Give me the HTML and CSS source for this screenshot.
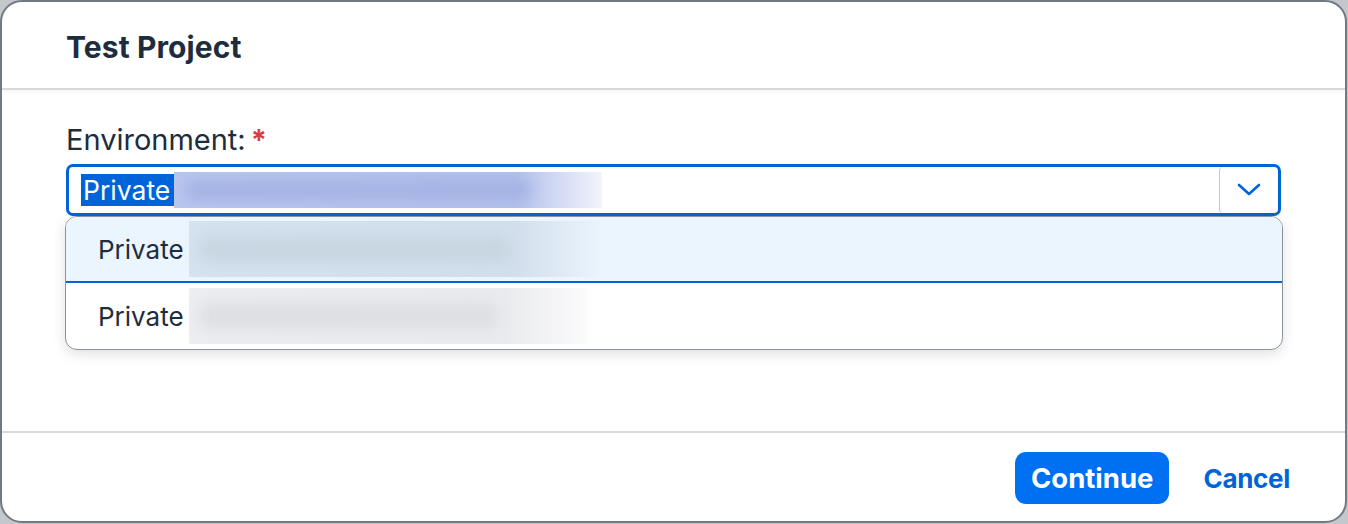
FILE: index.html
```html
<!DOCTYPE html>
<html>
<head>
<meta charset="utf-8">
<link rel="stylesheet" href="styles.css">
</head>
<body>
<div class="dialog">
  <header class="dlg-header">
    <h1 class="title">Test Project</h1>
  </header>
  <main class="dlg-content">
    <label class="label">Environment:<span class="req">*</span></label>
    <div class="combo">
      <div class="combo-value">
        <span class="sel">Private</span><span class="blur blur-sel"><span class="blur-core"></span></span>
      </div>
      <div class="combo-btn">
        <svg width="24" height="14" viewBox="0 0 24 14"><path d="M2 2 L12 11 L22 2" fill="none" stroke="#0064d9" stroke-width="2.6" stroke-linecap="round" stroke-linejoin="round"/></svg>
      </div>
    </div>
    <ul class="list">
      <li class="item active"><span class="item-text">Private</span><span class="blur blur-a"><span class="blur-core"></span></span></li>
      <li class="item"><span class="item-text">Private</span><span class="blur blur-b"><span class="blur-core"></span></span></li>
    </ul>
  </main>
  <footer class="dlg-footer">
    <button class="btn-primary">Continue</button>
    <button class="btn-link">Cancel</button>
  </footer>
</div>
</body>
</html>
```
FILE: styles.css
```css
html, body {
  margin: 0;
  padding: 0;
}
body {
  width: 1348px;
  height: 524px;
  background: #c4c7cb;
  font-family: Inter, "Noto Sans", "Liberation Sans", sans-serif;
  color: #1d2d3e;
  overflow: hidden;
}
.dialog {
  box-sizing: border-box;
  width: 1347px;
  height: 523px;
  border: 2px solid #707a85;
  border-radius: 22px;
  background: #fff;
  display: flex;
  flex-direction: column;
  overflow: hidden;
}
.dlg-header {
  height: 86px;
  border-bottom: 2px solid #d9d9d9;
  box-shadow: 0 2px 4px rgba(0,0,0,0.04);
  display: flex;
  align-items: center;
  padding-left: 64px;
}
.title {
  margin: 0;
  font-size: 30px;
  font-weight: 700;
  letter-spacing: 0.1px;
  color: #1d2d3e;
  padding-top: 4px;
}
.dlg-content {
  flex: 1;
  position: relative;
  padding: 33px 0 0 64px;
  border-bottom: 2px solid #d9d9d9;
}
.label {
  display: block;
  font-size: 29px;
  line-height: 34px;
  letter-spacing: 0;
  font-weight: 400;
  color: #1d2d3e;
}
.req {
  color: #d53f3f;
  font-weight: 700;
  margin-left: 5px;
}
.combo {
  box-sizing: border-box;
  margin-top: 7px;
  width: 1215px;
  height: 52px;
  border: 3px solid #0064d9;
  border-radius: 7px;
  display: flex;
  align-items: stretch;
}
.combo-value {
  flex: 1;
  display: flex;
  align-items: center;
  padding-left: 12px;
}
.sel {
  background: #0064d9;
  color: #fff;
  font-size: 26.5px;
  line-height: 32px;
  padding: 0 4px 0 2px;
  letter-spacing: 0;
}
.blur {
  display: inline-block;
  height: 36px;
  overflow: hidden;
  position: relative;
}
.blur-core {
  position: absolute;
  left: 10px;
  right: 20px;
  top: 8px;
  bottom: 8px;
  border-radius: 10px;
  filter: blur(7px);
}
.blur-sel {
  width: 428px;
  background: linear-gradient(90deg, #bac6ee 0%, #b4c1ec 80%, #f2f4fc 100%);
}
.blur-sel .blur-core {
  background: #a2b3e4;
  right: 70px;
}
.combo-btn {
  width: 58px;
  border-left: 1.5px solid #a9cdf5;
  border-radius: 4px;
  display: flex;
  align-items: center;
  justify-content: center;
}
.list {
  position: absolute;
  left: 63px;
  top: 126px;
  width: 1218px;
  margin: 0;
  padding: 0;
  list-style: none;
  box-sizing: border-box;
  border: 1.5px solid #8a939d;
  border-radius: 12px;
  background: #fff;
  overflow: hidden;
  box-shadow: 0 4px 14px rgba(0,0,0,0.12);
}
.item {
  height: 66px;
  display: flex;
  align-items: center;
  padding-left: 32px;
  font-size: 26px;
  letter-spacing: 0;
}
.item.active {
  background: #eaf5fe;
  border-bottom: 2px solid #0064d9;
  height: 64px;
}
.item-text {
  margin-right: 5px;
}
.blur-a {
  width: 412px;
  height: 56px;
  background: linear-gradient(90deg, #d6e2ef 0%, #d3dfec 80%, #eaf4fd 100%);
}
.blur-a .blur-core {
  background: #c8d6e2;
  top: 14px;
  bottom: 14px;
  right: 90px;
}
.blur-b {
  width: 398px;
  height: 56px;
  background: linear-gradient(90deg, #eceef2 0%, #eaebee 80%, #fbfbfc 100%);
}
.blur-b .blur-core {
  background: #dedfe2;
  top: 14px;
  bottom: 14px;
  right: 90px;
}
.dlg-footer {
  height: 88px;
  display: flex;
  align-items: center;
  justify-content: flex-end;
  padding-right: 55px;
  gap: 34px;
}
.btn-primary {
  font-family: Inter, "Noto Sans", sans-serif;
  height: 52px;
  padding: 0 16px;
  border: none;
  border-radius: 11px;
  background: #0070f2;
  color: #fff;
  font-size: 27.5px;
  font-weight: 700;
  letter-spacing: 0;
  margin-top: 2px;
}
.btn-link {
  font-family: Inter, "Noto Sans", sans-serif;
  border: none;
  background: transparent;
  color: #0064d9;
  font-size: 26px;
  font-weight: 700;
  letter-spacing: -0.3px;
  padding: 0;
  margin-top: 2px;
}
```
